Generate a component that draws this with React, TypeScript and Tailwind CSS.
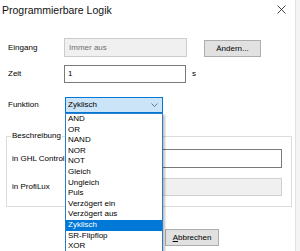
export default function App() {
  const items = [
    "AND",
    "OR",
    "NAND",
    "NOR",
    "NOT",
    "Gleich",
    "Ungleich",
    "Puls",
    "Verzögert ein",
    "Verzögert aus",
    "Zyklisch",
    "SR-Flipflop",
    "XOR",
  ];
  return (
    <div className="w-[300px] h-[251px] overflow-hidden bg-[#f4f4f4] flex font-['Liberation_Sans',Arial,sans-serif] text-[8px] text-black">
      <div className="relative w-[296px] h-full bg-white border-r border-[#e2e2e2] flex flex-col">
        {/* title bar */}
        <div className="h-[22px] flex items-center justify-between pl-[2px] pr-[9px] shrink-0">
          <span className="text-[10.5px] text-[#111]">Programmierbare Logik</span>
          <svg width="9" height="9" viewBox="0 0 9 9" className="mt-[-3px]">
            <path d="M0.5 0.5 L8.5 8.5 M8.5 0.5 L0.5 8.5" stroke="#333" strokeWidth="0.9" />
          </svg>
        </div>

        {/* Eingang */}
        <div className="mt-[16px] ml-[8px] h-[19px] flex items-center shrink-0">
          <span className="w-[56px]">Eingang</span>
          <div className="w-[123px] h-[19px] border border-[#cccccc] bg-[#f0f0f0] flex items-center pl-[4px] text-[#6d6d6d]">
            Immer aus
          </div>
          <div className="ml-[17px] mt-[2px] w-[57px] h-[17px] border border-[#adadad] bg-[#e1e1e1] flex items-center justify-center">
            Ändern...
          </div>
        </div>

        {/* Zeit */}
        <div className="mt-[8px] ml-[8px] h-[18px] flex items-center shrink-0">
          <span className="w-[56px]">Zeit</span>
          <div className="w-[122px] h-[18px] border border-[#7a7a7a] bg-white flex items-center pl-[3px]">
            1
          </div>
          <span className="ml-[6px]">s</span>
        </div>

        {/* Funktion */}
        <div className="mt-[14px] ml-[8px] h-[16px] flex items-center shrink-0">
          <span className="w-[57px]">Funktion</span>
          <div className="w-[98px] h-[16px] border border-[#0078d7] bg-[#cce4f7] flex items-center justify-between pl-[2px] pr-[4px]">
            <span>Zyklisch</span>
            <svg width="7" height="4" viewBox="0 0 7 4">
              <path d="M0.5 0.5 L3.5 3.5 L6.5 0.5" stroke="#555" strokeWidth="0.8" fill="none" />
            </svg>
          </div>
        </div>

        {/* Beschreibung group */}
        <fieldset className="mt-[18px] ml-[6px] w-[286px] border border-[#dcdcdc] pl-[5px] pr-[9px] pb-[10px] shrink-0">
          <legend className="px-[1px] ml-[-1px] leading-[10px]">Beschreibung</legend>
          <div className="mt-[8px] h-[19px] flex items-center">
            <span className="w-[83px]">in GHL Control</span>
            <div className="flex-1 h-[19px] border border-[#7a7a7a] bg-white" />
          </div>
          <div className="mt-[10px] h-[18px] flex items-center">
            <span className="w-[83px]">in ProfiLux</span>
            <div className="flex-1 h-[18px] border border-[#d0d0d0] bg-[#f0f0f0]" />
          </div>
        </fieldset>

        {/* buttons */}
        <div className="mt-[22px] ml-[104px] flex gap-[7px] shrink-0">
          <div className="w-[54px] h-[17px] border border-[#0078d7] bg-[#e1e1e1] flex items-center justify-center">
            OK
          </div>
          <div className="w-[54px] h-[17px] border border-[#adadad] bg-[#e1e1e1] flex items-center justify-center">
            <span>
              <span className="underline">A</span>bbrechen
            </span>
          </div>
        </div>

        {/* open dropdown list */}
        <div className="absolute left-[65px] top-[113px] w-[98px] border border-[#2b7dc9] bg-white shadow-[2px_2px_2px_rgba(0,0,0,0.25)]">
          {items.map((it) => (
            <div
              key={it}
              className={
                it === "Zyklisch"
                  ? "h-[10.6px] leading-[10.6px] pl-[2px] bg-[#0078d7] text-white"
                  : "h-[10.6px] leading-[10.6px] pl-[2px]"
              }
            >
              {it}
            </div>
          ))}
        </div>
      </div>
    </div>
  );
}
